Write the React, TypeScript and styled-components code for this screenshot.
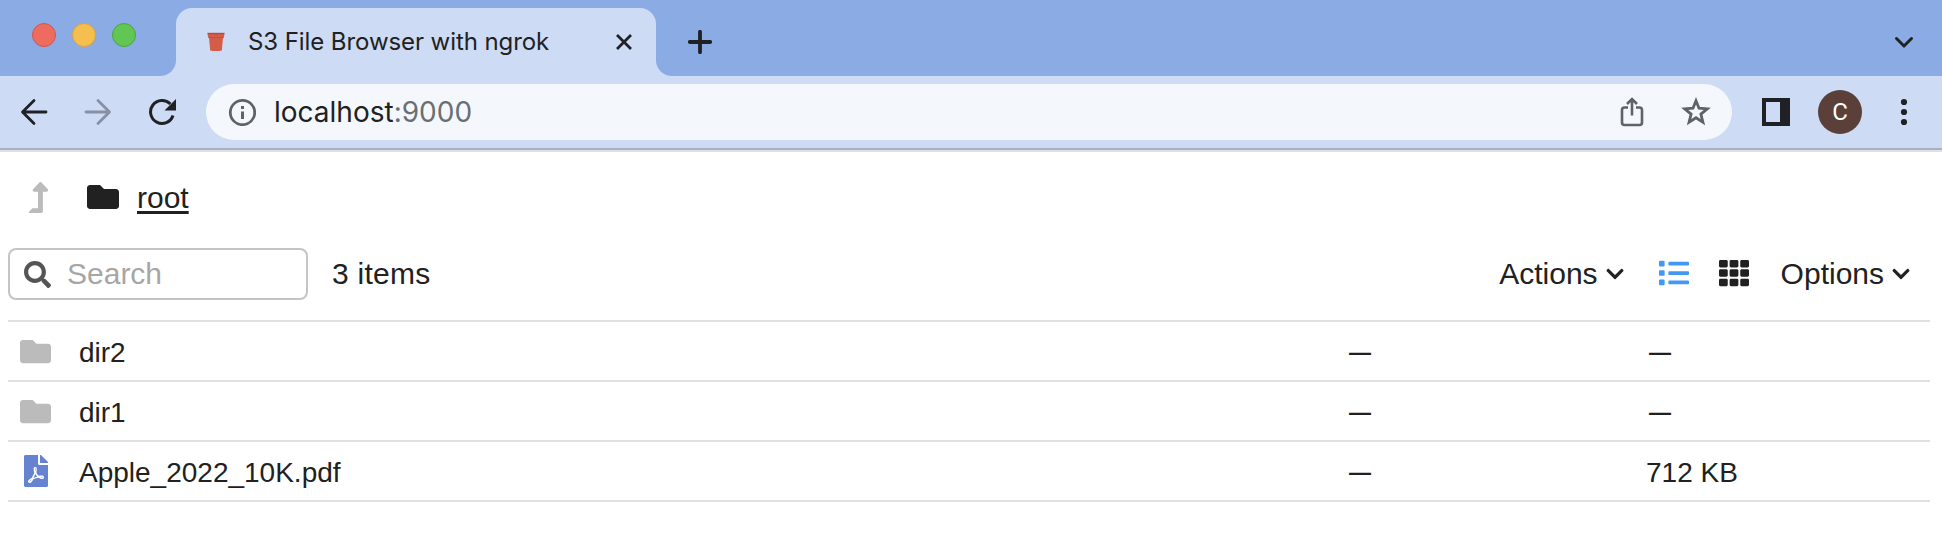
import React from 'react';
import styled, { createGlobalStyle } from 'styled-components';
import {
  FaChevronDown,
  FaFilePdf,
  FaFolder,
  FaLevelUpAlt,
  FaList,
  FaSearch,
  FaTh,
} from 'react-icons/fa';

const GlobalStyle = createGlobalStyle`
  * { box-sizing: border-box; }
  body { margin: 0; background: #fff; }
  svg { display: block; flex: none; }
`;

const Window = styled.div`
  width: 1942px;
  height: 546px;
  overflow: hidden;
  background: #fff;
  color: #212121;
  font-family: 'Liberation Sans', Arial, sans-serif;
`;

const TabStrip = styled.div`
  display: flex;
  height: 76px;
  padding: 8px 26px 0 32px;
  background: #8babe5;
`;

const Lights = styled.div`
  display: flex;
  gap: 16px;
  width: 128px;
  padding-top: 15px;
`;

const Light = styled.span<{ $fill: string; $edge: string }>`
  width: 24px;
  height: 24px;
  border: 1px solid ${(p) => p.$edge};
  border-radius: 50%;
  background: ${(p) => p.$fill};
`;

const Flare = styled.span<{ $side: 'left' | 'right' }>`
  align-self: flex-end;
  width: 16px;
  height: 16px;
  background: radial-gradient(
    circle at ${(p) => (p.$side === 'left' ? '0 0' : '100% 0')},
    transparent 15.5px,
    #cddbf5 16.5px
  );
`;

const Tab = styled.div`
  display: flex;
  align-items: center;
  width: 480px;
  height: 68px;
  padding: 0 24px 0 30px;
  border-radius: 16px 16px 0 0;
  background: #cddbf5;
`;

const TabTitle = styled.span`
  flex: 1;
  margin-left: 22px;
  font: 400 24px/30px Inter, sans-serif;
  letter-spacing: -0.08px;
  white-space: nowrap;
`;

const NewTab = styled.div`
  flex: 1;
  padding: 22px 0 0 16px;
`;

const TabMenu = styled.div`
  padding-top: 26px;
`;

const Toolbar = styled.div`
  display: flex;
  align-items: center;
  height: 76px;
  padding: 0 35px 0 20px;
  border-bottom: 2px solid #e0e0e0;
  background: #cddbf5;
  box-shadow: inset 0 -2px 0 #a5b0c9;
`;

const NavButtons = styled.div`
  display: flex;
  gap: 36px;
  width: 186px;
  padding-bottom: 2px;
`;

const AddressBar = styled.div`
  display: flex;
  align-items: center;
  width: 1526px;
  height: 56px;
  margin-bottom: 2px;
  padding: 0 21px 0 22px;
  border-radius: 28px;
  background: #f4f8fd;
`;

const Url = styled.span`
  flex: 1;
  margin-left: 18px;
  color: #202124;
  font: 400 28px/34px Inter, sans-serif;
  white-space: nowrap;
`;

const Port = styled.span`
  color: #6b6e72;
`;

const AddressActions = styled.div`
  display: flex;
  align-items: center;
  gap: 37px;
`;

const BrowserActions = styled.div`
  display: flex;
  flex: 1;
  align-items: center;
  justify-content: flex-end;
  padding-bottom: 2px;
`;

const Avatar = styled.span`
  width: 44px;
  height: 44px;
  margin: 0 39px 0 28px;
  border-radius: 50%;
  background: #5a4038;
  color: #fff;
  font: 400 24px/45px Roboto, sans-serif;
  text-align: center;
`;

const Browser = styled.main`
  padding: 0 12px 0 8px;
`;

const Breadcrumbs = styled.nav`
  display: flex;
  align-items: center;
  height: 92px;
  padding-left: 15px;
`;

const UpIcon = styled.span`
  width: 64px;
  padding-bottom: 2px;
  color: #bbb;
`;

const CrumbIcon = styled.span`
  padding-bottom: 2px;
`;

const Crumb = styled.span`
  margin-left: 18px;
  font-size: 30px;
  line-height: 36px;
  text-decoration: underline;
  text-decoration-thickness: 3px;
  text-underline-offset: 3px;
  text-decoration-skip-ink: none;
`;

const Controls = styled.div`
  display: flex;
  align-items: center;
  height: 60px;
  margin-bottom: 16px;
  padding-right: 19px;
  font-size: 30px;
  line-height: 36px;
`;

const SearchBox = styled.label`
  display: flex;
  align-items: center;
  width: 300px;
  height: 52px;
  padding-left: 14px;
  border: 2px solid #c4c4c4;
  border-radius: 8px;
  color: #555;
`;

const SearchInput = styled.input`
  width: 200px;
  margin-left: 16px;
  padding: 0;
  border: 0;
  outline: 0;
  background: transparent;
  font: 30px/36px 'Liberation Sans', Arial, sans-serif;
  &::placeholder { color: #a6a6a6; opacity: 1; }
`;

const ItemCount = styled.span`
  flex: 1;
  margin-left: 24px;
  letter-spacing: 0.25px;
`;

const MenuButton = styled.span`
  display: flex;
  align-items: center;
  gap: 7px;
`;

const ViewButtons = styled.div`
  display: flex;
  gap: 30px;
  margin: 0 32px 0 34px;
  padding-bottom: 3px;
`;

const ViewIcon = styled.span<{ $active?: boolean }>`
  color: ${(p) => (p.$active ? '#4298f5' : '#212121')};
`;

const FileList = styled.div`
  border-top: 2px solid #e0e0e0;
`;

const FileRow = styled.div`
  display: grid;
  grid-template-columns: 71px 1270px 297px 1fr;
  align-items: center;
  height: 60px;
  border-bottom: 2px solid #e0e0e0;
  font-size: 28px;
  line-height: 34px;
`;

const FileIcon = styled.span<{ $color: string }>`
  padding-left: 12px;
  color: ${(p) => p.$color};
`;

const FileText = styled.span`
  padding-top: 3px;
  white-space: nowrap;
`;

const Dash = styled.span<{ $inset?: number }>`
  padding: 4px 0 0 ${(p) => p.$inset ?? 0}px;
  font-size: 22px;
  font-weight: 700;
`;

const files = [
  { name: 'dir2', folder: true },
  { name: 'dir1', folder: true },
  { name: 'Apple_2022_10K.pdf', folder: false, size: '712 KB' },
];

const BucketIcon = () => (
  <svg width="20" height="20" viewBox="0 0 20 20">
    <path d="M1.500 1h17l-.6 4.800h-.9L15.800 18.500q-5.800 1.200-11.600 0L3 5.800h-.9z" fill="#d35d48" />
    <path d="M1.500 .8h17l-.2 1.400H1.700z" fill="#a9433d" opacity=".7" />
    <path d="M2.500 5h15v1h-15z" fill="#b4473b" opacity=".6" />
  </svg>
);

const CloseIcon = () => (
  <svg width="16" height="16" viewBox="0 0 16 16">
    <path d="M1 1l14 14M15 1L1 15" stroke="#202124" strokeWidth="2.800" />
  </svg>
);

const PlusIcon = () => (
  <svg width="24" height="24" viewBox="0 0 24 24">
    <path d="M12 1.800v20.400M1.800 12h20.400" stroke="#202124" strokeWidth="3.800" strokeLinecap="round" />
  </svg>
);

const TabMenuIcon = () => (
  <svg width="24" height="18" viewBox="0 0 24 18">
    <path d="M4.500 4.500L12 12l7.500-7.500" fill="none" stroke="#202124" strokeWidth="3" strokeLinecap="round" />
  </svg>
);

const ArrowIcon = ({ forward = false }: { forward?: boolean }) => (
  <svg width="28" height="28" viewBox="0 0 28 28">
    <path
      d={forward ? 'M2 14h23M14 2.500L25.500 14 14 25.500' : 'M26 14H3M14 2.500L2.500 14 14 25.500'}
      fill="none"
      stroke={forward ? '#8790a4' : '#202124'}
      strokeWidth="2.800"
      strokeLinecap="round"
      strokeLinejoin="round"
    />
  </svg>
);

const ReloadIcon = () => (
  <svg width="28" height="28" viewBox="0 0 28 28">
    <path d="M25 17.500A11.500 11.500 0 1 1 22.400 6" fill="none" stroke="#202124" strokeWidth="3" />
    <path d="M28 1v11.500H16.500z" fill="#202124" />
  </svg>
);

const InfoIcon = () => (
  <svg width="28" height="28" viewBox="0 0 28 28">
    <circle cx="14.500" cy="14.500" r="12.200" fill="none" stroke="#5f6368" strokeWidth="2.800" />
    <path d="M13 8h3v3h-3zM13 13.500h3V21h-3z" fill="#5f6368" />
  </svg>
);

const ShareIcon = () => (
  <svg width="24" height="30" viewBox="0 0 24 30">
    <path
      d="M8 10.500H4.500a2.500 2.500 0 0 0-2.500 2.500v12.500A2.500 2.500 0 0 0 4.500 28h15a2.500 2.500 0 0 0 2.500-2.500V13a2.500 2.500 0 0 0-2.500-2.500H16M12 18.500V2.500M7 7l5-5 5 5"
      fill="none"
      stroke="#5f6368"
      strokeWidth="2.600"
    />
  </svg>
);

const StarIcon = () => (
  <svg width="30" height="30" viewBox="0 0 30 30">
    <path
      d="M15 3.800l3 7.400 8.300.6-6.400 5.300 2 8-6.900-4.400-6.900 4.400 2-8-6.400-5.300 8.300-.6z"
      fill="none"
      stroke="#5f6368"
      strokeWidth="2.800"
    />
  </svg>
);

const SidePanelIcon = () => (
  <svg width="28" height="28" viewBox="0 0 28 28">
    <path d="M0 0h28v28H0zM4 4v20h14V4z" fill="#202124" fillRule="evenodd" />
  </svg>
);

const MoreIcon = () => (
  <svg width="6" height="28" viewBox="0 0 6 28" overflow="visible">
    <circle cx="3" cy="4" r="3.100" fill="#202124" />
    <circle cx="3" cy="14" r="3.100" fill="#202124" />
    <circle cx="3" cy="24" r="3.100" fill="#202124" />
  </svg>
);

export default function App() {
  return (
    <Window>
      <GlobalStyle />
      <TabStrip>
        <Lights>
          <Light $fill="#ed6b5f" $edge="#d5544a" />
          <Light $fill="#f5bf50" $edge="#d8a240" />
          <Light $fill="#62c655" $edge="#4ba63f" />
        </Lights>
        <Flare $side="left" />
        <Tab>
          <BucketIcon />
          <TabTitle>S3 File Browser with ngrok</TabTitle>
          <CloseIcon />
        </Tab>
        <Flare $side="right" />
        <NewTab>
          <PlusIcon />
        </NewTab>
        <TabMenu>
          <TabMenuIcon />
        </TabMenu>
      </TabStrip>
      <Toolbar>
        <NavButtons>
          <ArrowIcon />
          <ArrowIcon forward />
          <ReloadIcon />
        </NavButtons>
        <AddressBar>
          <InfoIcon />
          <Url>
            localhost<Port>:9000</Port>
          </Url>
          <AddressActions>
            <ShareIcon />
            <StarIcon />
          </AddressActions>
        </AddressBar>
        <BrowserActions>
          <SidePanelIcon />
          <Avatar>C</Avatar>
          <MoreIcon />
        </BrowserActions>
      </Toolbar>
      <Browser>
        <Breadcrumbs>
          <UpIcon>
            <FaLevelUpAlt size={31} />
          </UpIcon>
          <CrumbIcon>
            <FaFolder size={32} />
          </CrumbIcon>
          <Crumb>root</Crumb>
        </Breadcrumbs>
        <Controls>
          <SearchBox>
            <FaSearch size={27} />
            <SearchInput placeholder="Search" />
          </SearchBox>
          <ItemCount>3 items</ItemCount>
          <MenuButton>
            Actions <FaChevronDown size={20} />
          </MenuButton>
          <ViewButtons>
            <ViewIcon $active>
              <FaList size={30} />
            </ViewIcon>
            <ViewIcon>
              <FaTh size={30} />
            </ViewIcon>
          </ViewButtons>
          <MenuButton>
            Options <FaChevronDown size={20} />
          </MenuButton>
        </Controls>
        <FileList>
          {files.map((file) => (
            <FileRow key={file.name}>
              <FileIcon $color={file.folder ? '#bbb' : '#6583d0'}>
                {file.folder ? <FaFolder size={31} /> : <FaFilePdf size={32} />}
              </FileIcon>
              <FileText>{file.name}</FileText>
              <Dash>—</Dash>
              {file.size ? <FileText>{file.size}</FileText> : <Dash $inset={3}>—</Dash>}
            </FileRow>
          ))}
        </FileList>
      </Browser>
    </Window>
  );
}
